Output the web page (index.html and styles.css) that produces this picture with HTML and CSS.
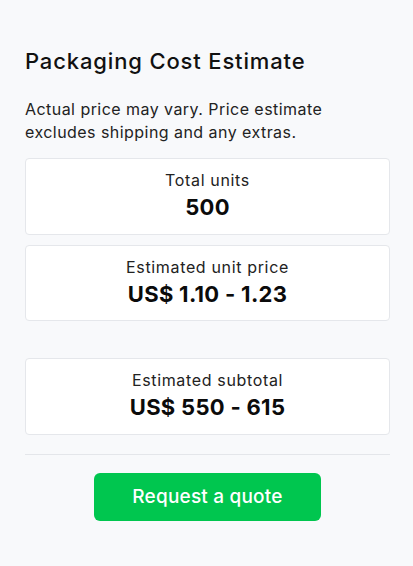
FILE: index.html
```html
<!DOCTYPE html>
<html>
<head>
<meta charset="utf-8">
<link rel="stylesheet" href="styles.css">
</head>
<body>
<div class="panel">
  <h1 class="title">Packaging Cost Estimate</h1>
  <p class="note">Actual price may vary. Price estimate excludes shipping and any extras.</p>
  <div class="card">
    <div class="label">Total units</div>
    <div class="value">500</div>
  </div>
  <div class="card">
    <div class="label">Estimated unit price</div>
    <div class="value">US$ 1.10 - 1.23</div>
  </div>
  <div class="card card-sub">
    <div class="label">Estimated subtotal</div>
    <div class="value">US$ 550 - 615</div>
  </div>
  <hr class="divider">
  <div class="actions">
    <button class="quote">Request a quote</button>
  </div>
</div>
</body>
</html>
```
FILE: styles.css
```css
html, body {
  margin: 0;
  padding: 0;
  background: #f8f9fb;
}
body {
  font-family: Inter, "Noto Sans", sans-serif;
  color: #111;
}
.panel {
  width: 365px;
  padding: 47px 23px 0 25px;
  display: flex;
  flex-direction: column;
}
.title {
  margin: 0;
  font-size: 22px;
  font-weight: 500;
  line-height: 28px;
  letter-spacing: 0.85px;
  color: #111;
}
.note {
  margin: 23px 0 0;
  max-width: 335px;
  font-size: 16px;
  line-height: 23px;
  letter-spacing: 0.45px;
  color: #222;
}
.card {
  margin-top: 10px;
  background: #fff;
  border: 1px solid #e5e7eb;
  border-radius: 4px;
  height: 76.5px;
  box-sizing: border-box;
  display: flex;
  flex-direction: column;
  align-items: center;
  padding-top: 10px;
}
.note + .card { margin-top: 14px; }
.card-sub { margin-top: 37px; }
.label {
  font-size: 16px;
  line-height: 22px;
  letter-spacing: 0.65px;
  color: #222;
}
.value {
  margin-top: 2px;
  font-size: 22px;
  font-weight: 700;
  line-height: 28px;
  letter-spacing: 0.3px;
  color: #0b0b0b;
}
.divider {
  margin: 19px 0 0;
  border: 0;
  border-top: 1px solid #e4e6ea;
  height: 0;
}
.actions {
  display: flex;
  justify-content: center;
  margin-top: 18px;
}
.quote {
  width: 227px;
  height: 48px;
  border: 0;
  border-radius: 6px;
  background: #00c64f;
  color: #fff;
  font-family: inherit;
  font-size: 19px;
  font-weight: 500;
  letter-spacing: 0.2px;
}
```
